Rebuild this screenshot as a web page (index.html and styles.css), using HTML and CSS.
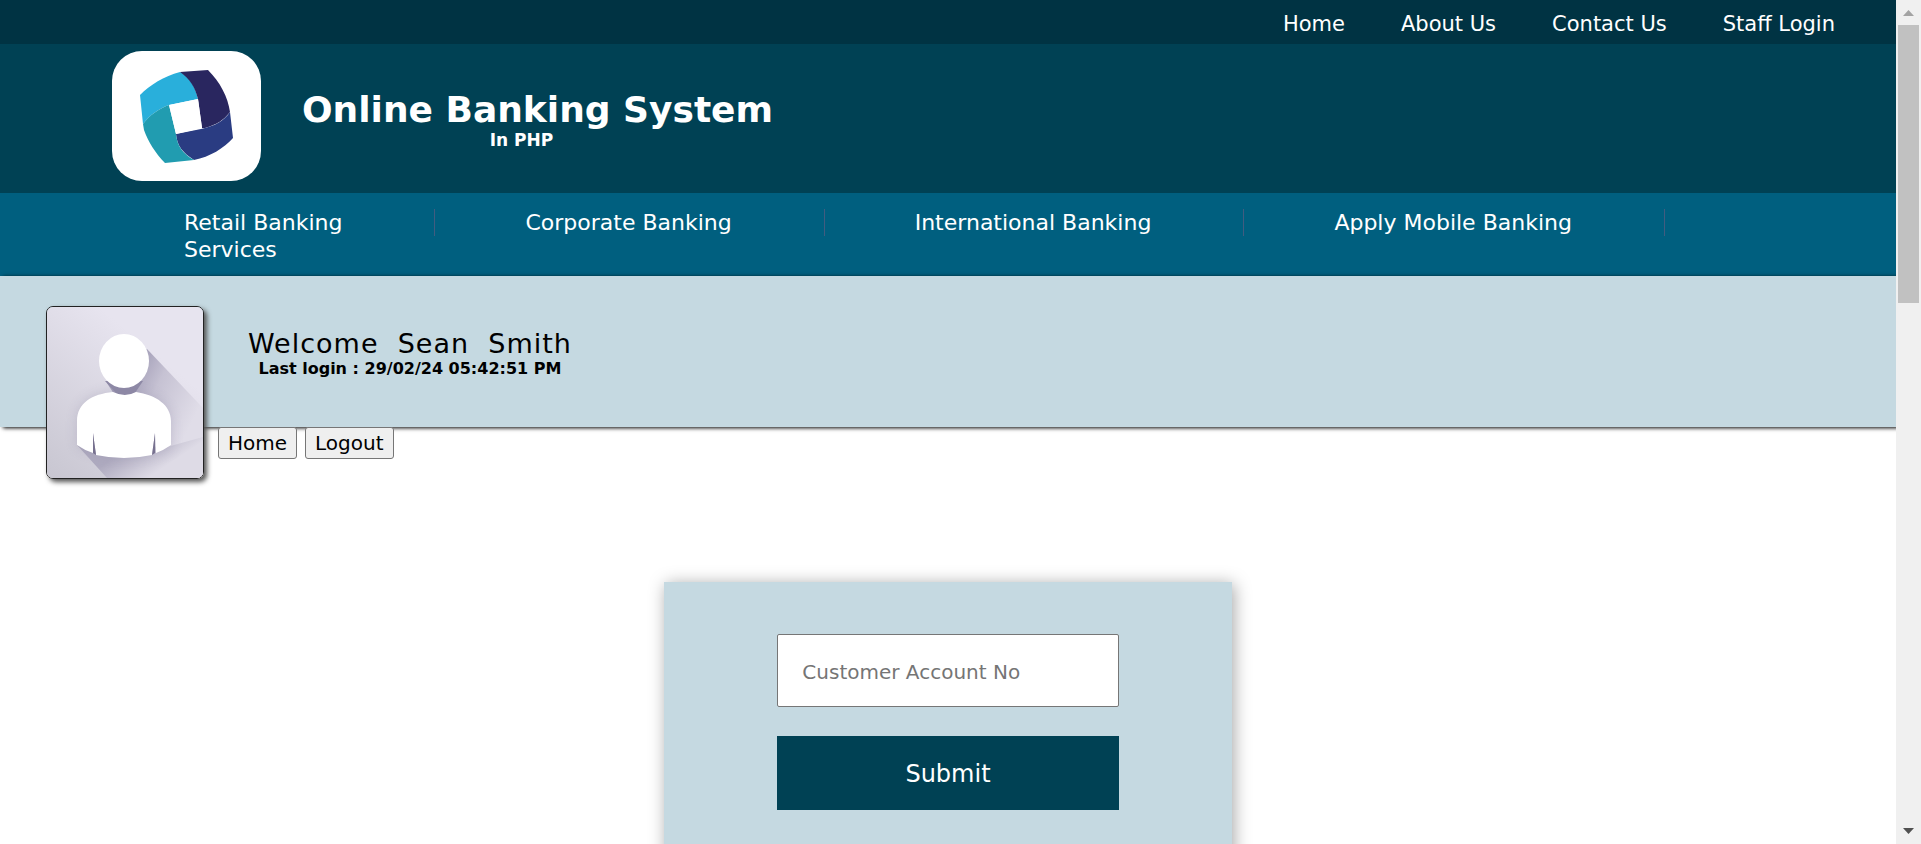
FILE: index.html
```html
<!DOCTYPE html>
<html lang="en">
<head>
<meta charset="utf-8">
<title>Online Banking System</title>
<link rel="stylesheet" href="styles.css">
</head>
<body>
<div class="window">
  <div class="page">
    <nav class="topbar" aria-label="Site">
      <a href="#home">Home</a>
      <a href="#about">About Us</a>
      <a href="#contact">Contact Us</a>
      <a href="#staff">Staff Login</a>
    </nav>
    <header class="header">
      <div class="logo">
        <svg viewBox="0 0 149 130" role="img" aria-label="Bank logo">
          <path fill="#29afdb" d="M28 44C38 34 52 25 68 21C78 27 83 35 86 48L57 54C46 58 38 64 31 73Z"/>
          <path fill="#29265f" d="M68 21L96 19C108 31 116 46 118 61C112 69 104 74 93 77L90 77L86 48C83 36 78 28 68 21Z"/>
          <path fill="#2a3c82" d="M118 61L121 87C112 97 98 106 82 109C71 102 65 95 64 83L89 78C103 75 112 70 118 61Z"/>
          <path fill="#219cb0" d="M57 54L64 83C65 95 71 103 82 109L53 112C43 102 36 90 32 79L31 73C38 64 46 58 57 54Z"/>
          <path fill="#fff" d="M57 54L86 48L90 77L64 83Z"/>
        </svg>
      </div>
      <div class="brand">
        <h1>Online Banking System</h1>
        <p>In PHP</p>
      </div>
    </header>
    <nav class="menu" aria-label="Services">
      <a href="#retail">Retail Banking</a>
      <a href="#corporate">Corporate Banking</a>
      <a href="#international">International Banking</a>
      <a href="#mobile">Apply Mobile Banking</a>
      <a href="#services">Services</a>
    </nav>
    <section class="welcome">
      <div class="avatar">
        <svg viewBox="0 0 156 171" preserveAspectRatio="none" role="img" aria-label="Customer photo">
          <defs>
            <linearGradient id="bg" x1="0" y1="1" x2="0.6" y2="0.2">
              <stop offset="0" stop-color="#c8c6d1"/>
              <stop offset="1" stop-color="#e7e4ef"/>
            </linearGradient>
            <linearGradient id="cast" gradientUnits="userSpaceOnUse" x1="75" y1="80" x2="145" y2="115">
              <stop offset="0" stop-color="#a09bb5"/>
              <stop offset="0.4" stop-color="#c6c2d3"/>
              <stop offset="1" stop-color="#e0dde8"/>
            </linearGradient>
            <linearGradient id="low" gradientUnits="userSpaceOnUse" x1="75" y1="145" x2="95" y2="175">
              <stop offset="0" stop-color="#aeaabf"/>
              <stop offset="1" stop-color="#dedbe6"/>
            </linearGradient>
            <filter id="soft" x="-30%" y="-30%" width="160%" height="160%"><feGaussianBlur stdDeviation="6"/></filter>
          </defs>
          <rect width="156" height="171" fill="url(#bg)"/>
          <path fill="url(#cast)" d="M100 42L156 101V171H120L60 76Z"/>
          <path fill="url(#low)" d="M30 138L60 171H156V130L120 140Z"/>
          <path fill="#8d88a5" opacity=".3" filter="url(#soft)" d="M30 140V112C31 94 48 86 65 85H90C108 87 122 98 124 112V142Q77 160 30 140Z"/>
          <path fill="#8d88a5" d="M58 74L69 86Q78 91 88 86L96 74Z"/>
          <ellipse cx="77" cy="54" rx="25" ry="27" fill="#fff"/>
          <path fill="#fff" d="M30 138V114C30 96 45 87 66 85Q78 91 89 85C109 88 124 98 124 114V138Q117 143 109 146L108 126L105 148Q77 154 49 148L46 126L46 146Q37 143 30 138Z"/>
          <path fill="#77718f" d="M46 126L49 148L46 146ZM108 126L105 148L108 146Z"/>
        </svg>
      </div>
      <div class="greeting">
        <h2>Welcome&nbsp; Sean&nbsp; Smith</h2>
        <p>Last login : 29/02/24 05:42:51 PM</p>
      </div>
    </section>
    <div class="actions">
      <button type="button">Home</button>
      <button type="button">Logout</button>
    </div>
    <form class="panel">
      <input type="text" name="account" placeholder="Customer Account No" aria-label="Customer Account No">
      <button type="submit">Submit</button>
    </form>
  </div>
  <div class="scrollbar" aria-hidden="true">
    <svg viewBox="0 0 25 25"><path fill="#a3a3a3" d="M7 16L12.500 10L18 16Z"/></svg>
    <div class="track"><div class="thumb"></div></div>
    <svg viewBox="0 0 25 25"><path fill="#505050" d="M7 9H18L12.500 15Z"/></svg>
  </div>
</div>
</body>
</html>
```
FILE: styles.css
```css
* { box-sizing: border-box; }
body {
  margin: 0;
  font-family: "DejaVu Sans", Verdana, sans-serif;
  background: #fff;
}
h1, h2, p { margin: 0; }
.window { display: flex; height: 100vh; overflow: hidden; }
.page { flex: 1; min-width: 0; overflow: hidden; }

.topbar {
  display: flex;
  justify-content: flex-end;
  align-items: center;
  gap: 56px;
  height: 44px;
  padding: 4px 61px 0 0;
  background: #003343;
}
.topbar a { color: #fff; font-size: 21px; line-height: 26px; text-decoration: none; }

.header {
  display: flex;
  align-items: center;
  gap: 41px;
  padding: 7px 112px 12px;
  background: #004154;
}
.logo {
  width: 149px;
  height: 130px;
  border-radius: 30px;
  background: #fff;
}
.logo svg { display: block; }
.brand { color: #fff; font-weight: bold; padding-top: 8px; }
.brand h1 { font-size: 36px; line-height: 40px; }
.brand p { padding-right: 32px; font-size: 17px; line-height: 20px; text-align: center; }

.menu {
  display: flex;
  flex-wrap: wrap;
  padding: 16px 0 13px 94px;
  background: #005f7f;
}
.menu a {
  padding: 0 92px 0 90px;
  border-right: 1px solid #415c80;
  color: #fff;
  font-size: 22px;
  line-height: 27px;
  text-decoration: none;
}
.menu a:last-child { border-right: 0; }

.welcome {
  position: relative;
  height: 151px;
  padding: 52px 0 0 248px;
  background: #c5d9e1;
  box-shadow: 3px 1px 4px #000;
}
.avatar {
  position: absolute;
  top: 30px;
  left: 46px;
  width: 158px;
  height: 173px;
  overflow: hidden;
  border: 1px solid #222;
  border-radius: 7px;
  box-shadow: 3px 3px 5px #555;
}
.avatar svg { display: block; width: 100%; height: 100%; }
.greeting { width: max-content; text-align: center; }
.greeting h2 { font-size: 27px; font-weight: normal; line-height: 32px; letter-spacing: 1px; }
.greeting p { font-size: 16px; font-weight: bold; line-height: 18px; }

.actions { position: relative; display: flex; gap: 8px; padding-left: 218px; }
.actions button {
  padding: 1px 9px 0;
  border: 1px solid #767676;
  border-radius: 3px;
  background: #efefef;
  color: #000;
  font: 20px/29px "DejaVu Sans", Verdana, sans-serif;
}

.panel {
  display: flex;
  flex-direction: column;
  align-items: center;
  gap: 29px;
  width: 30%;
  margin: 123px auto 0;
  padding: 52px 0;
  background: #c5d9e1;
  box-shadow: 2px 2px 16px rgba(0, 0, 0, .35);
}
.panel input, .panel button {
  width: 60%;
  height: 73px;
  font-family: "DejaVu Sans", Verdana, sans-serif;
}
.panel input {
  padding: 2px 24px 0;
  border: 1px solid #767676;
  border-radius: 2px;
  font-size: 20px;
}
.panel input::placeholder { color: #757575; }
.panel button { height: 74px; padding-top: 3px; border: 0; background: #004154; color: #fff; font-size: 24px; }

.scrollbar {
  display: flex;
  flex-direction: column;
  width: 25px;
  background: #f0f0f0;
}
.scrollbar svg { display: block; width: 25px; height: 25px; }
.track { flex: 1; padding: 0 2px; }
.thumb { height: 35%; background: #c1c1c1; }
```
